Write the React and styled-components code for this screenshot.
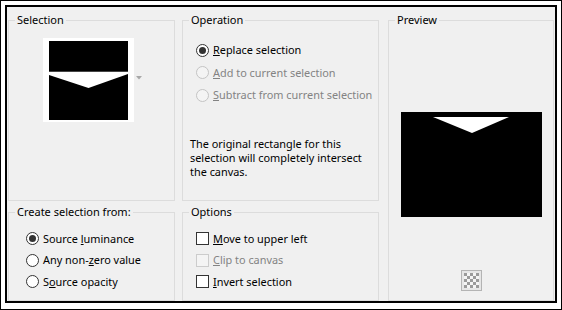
import React from "react"
import styled, { createGlobalStyle } from "styled-components"

const GlobalStyle = createGlobalStyle`
body{
    margin:0;
    background:#fff;
    font-family:"Segoe UI","Noto Sans",sans-serif;
    font-size:11px;
    color:#000;
}
`

const Window = styled.div`
width:562px;
height:310px;
box-sizing:border-box;
border:1px solid #000;
background:#fff;
padding:4px 4px 6px 4px;
`

const Panel = styled.div`
height:100%;
box-sizing:border-box;
border:2px solid #000;
background:#f0f0f0;
padding:5px 1px 0 1px;
display:grid;
grid-template-columns:167px 197px 1fr;
grid-template-rows:189px 97px;
column-gap:7px;
row-gap:3px;
`

const Group = styled.fieldset`
margin:0;
margin-left:${p => p.$shift || 0}px;
padding:0;
min-width:0;
border:1px solid #dcdcdc;
grid-row:${p => p.$span ? "1 / span 2" : "auto"};
grid-column:${p => p.$col || "auto"};
display:flex;
flex-direction:column;
`

const Legend = styled.legend`
margin-left:6px;
padding:0 2px;
line-height:16px;
font-size:11px;
`

const ThumbRow = styled.div`
display:flex;
align-items:center;
margin:10px 0 0 34px;
`

const Thumb = styled.div`
width:79px;
height:79px;
padding:3px 6px 2px 6px;
background:#fff;
svg{ display:block; }
`

const DropArrow = styled.svg`
margin-left:2px;
margin-top:-4px;
`

const Options = styled.div`
display:flex;
flex-direction:column;
margin-top:${p => p.$top}px;
padding-left:${p => p.$left}px;
`

const Row = styled.div`
display:flex;
align-items:center;
gap:4px;
height:${p => p.$h || 22}px;
line-height:16px;
font-size:10.9px;
color:${p => p.$disabled ? "#838383" : "#000"};
white-space:nowrap;
`

const Radio = styled.span`
width:13px;
height:13px;
box-sizing:border-box;
border-radius:50%;
border:1px solid ${p => p.$disabled ? "#c4c4c4" : "#333"};
background:${p => p.$disabled ? "#f4f4f4" : "#fff"};
display:flex;
align-items:center;
justify-content:center;
flex-shrink:0;
&::after{
    content:"";
    display:${p => p.$checked ? "block" : "none"};
    width:7px;
    height:7px;
    border-radius:50%;
    background:#333;
}
`

const Check = styled.span`
width:13px;
height:13px;
box-sizing:border-box;
border:1px solid ${p => p.$disabled ? "#cccccc" : "#333"};
background:${p => p.$disabled ? "#f4f4f4" : "#fff"};
flex-shrink:0;
`

const Note = styled.p`
margin:30px 0 0 7px;
line-height:14px;
font-size:10.9px;
white-space:nowrap;
`

const PreviewBox = styled.div`
display:flex;
flex-direction:column;
align-items:center;
padding-top:84px;
svg{ display:block; }
`

const ToggleButton = styled.button`
margin-top:53px;
width:21px;
height:21px;
padding:0;
border:1px solid #b4b4b4;
background:#e6e6e6;
display:flex;
align-items:center;
justify-content:center;
`

function Checker(){
    const cells = []
    for (let r = 0; r < 5; r++){
        for (let c = 0; c < 5; c++){
            if ((r + c) % 2 === 0){
                cells.push(<rect key={r + "-" + c} x={c * 3} y={r * 3} width="3" height="3" fill="#9a9a9a" />)
            }
        }
    }
    return (
        <svg width="15" height="15" viewBox="0 0 15 15">
            <rect width="15" height="15" fill="#f4f4f4" />
            {cells}
        </svg>
    )
}

const selectionFrom = [
    { label: <>Source <u>l</u>uminance</>, checked: true },
    { label: <>Any non-<u>z</u>ero value</> },
    { label: <>S<u>o</u>urce opacity</> },
]

const operations = [
    { label: <><u>R</u>eplace selection</>, checked: true },
    { label: <><u>A</u>dd to current selection</>, disabled: true },
    { label: <><u>S</u>ubtract from current selection</>, disabled: true },
]

const options = [
    { label: <><u>M</u>ove to upper left</> },
    { label: <><u>C</u>lip to canvas</>, disabled: true },
    { label: <><u>I</u>nvert selection</> },
]

export default function App(){
    return (
        <>
            <GlobalStyle />
            <Window>
                <Panel>
                    <Group $col="1">
                        <Legend>Selection</Legend>
                        <ThumbRow>
                            <Thumb>
                                <svg width="79" height="79" viewBox="0 0 79 79">
                                    <rect width="79" height="79" fill="#000" />
                                    <rect x="0" y="30.5" width="79" height="1" fill="#8a8a8a" />
                                    <polygon points="0,31 79,31 79,33 39.5,47 0,34" fill="#fff" />
                                </svg>
                            </Thumb>
                            <DropArrow width="6" height="4" viewBox="0 0 6 4">
                                <polygon points="0,0 6,0 3,3.5" fill="#a8a8a8" />
                            </DropArrow>
                        </ThumbRow>
                    </Group>

                    <Group $col="2">
                        <Legend>Operation</Legend>
                        <Options $top={11} $left={13}>
                            {operations.map((o, i) => (
                                <Row key={i} $disabled={o.disabled} $h={22.5}>
                                    <Radio $checked={o.checked} $disabled={o.disabled} />
                                    <span>{o.label}</span>
                                </Row>
                            ))}
                        </Options>
                        <Note>
                            The original rectangle for this<br />
                            selection will completely intersect<br />
                            the canvas.
                        </Note>
                    </Group>

                    <Group $col="3" $span $shift={2}>
                        <Legend>Preview</Legend>
                        <PreviewBox>
                            <svg width="141" height="105" viewBox="0 0 141 105">
                                <rect width="141" height="105" fill="#000" />
                                <polygon points="32,5 108,5 71,21" fill="#fff" />
                            </svg>
                            <ToggleButton type="button">
                                <Checker />
                            </ToggleButton>
                        </PreviewBox>
                    </Group>

                    <Group $col="1">
                        <Legend>Create selection from:</Legend>
                        <Options $top={8} $left={17}>
                            {selectionFrom.map((o, i) => (
                                <Row key={i} $h={21.5}>
                                    <Radio $checked={o.checked} />
                                    <span>{o.label}</span>
                                </Row>
                            ))}
                        </Options>
                    </Group>

                    <Group $col="2">
                        <Legend>Options</Legend>
                        <Options $top={8} $left={13}>
                            {options.map((o, i) => (
                                <Row key={i} $disabled={o.disabled} $h={21.5}>
                                    <Check $disabled={o.disabled} />
                                    <span>{o.label}</span>
                                </Row>
                            ))}
                        </Options>
                    </Group>
                </Panel>
            </Window>
        </>
    )
}
